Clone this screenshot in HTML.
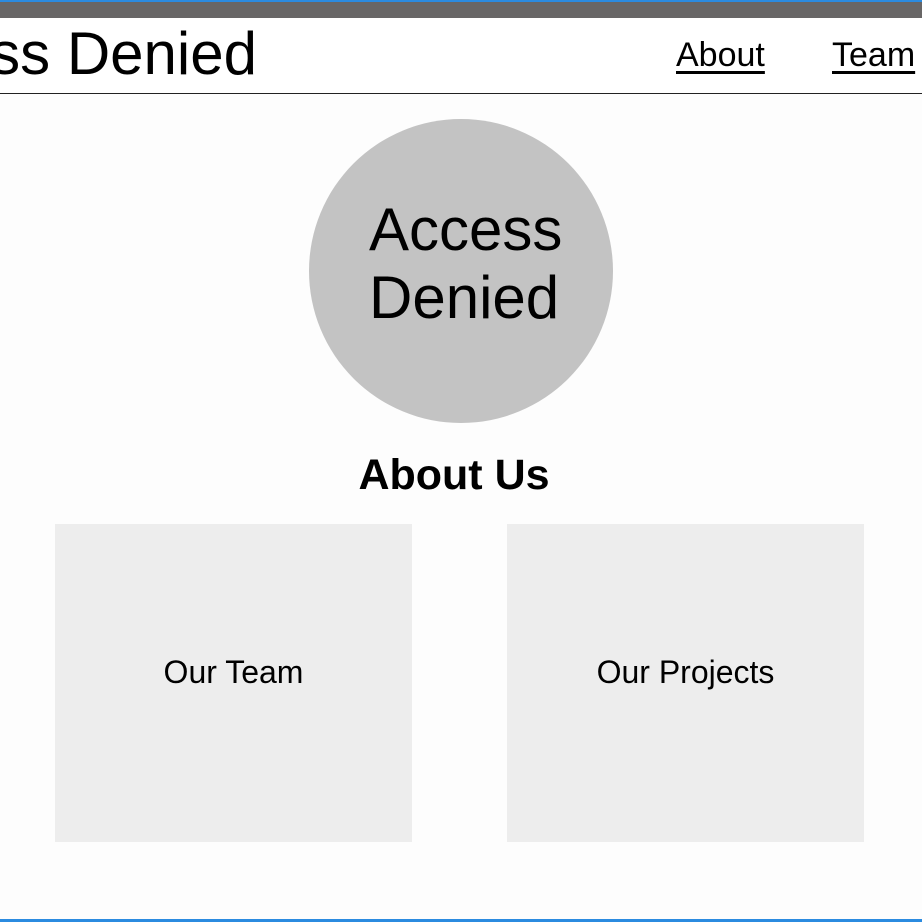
<!DOCTYPE html>
<html><head><style>
*{margin:0;padding:0;box-sizing:border-box}
body{width:922px;height:922px;background:#fdfdfd;position:relative;overflow:hidden;font-family:"Liberation Sans",Arial,sans-serif;color:#000}
.a{position:absolute}
</style></head><body>
<div class="a" style="left:0;top:0;width:922px;height:2px;background:#2b8be0"></div>
<div class="a" style="left:0;top:2px;width:922px;height:16px;background:#686666"></div>
<div class="a" style="left:0;top:18px;width:922px;height:76px;background:#fff;border-bottom:1px solid #222;overflow:hidden">
<div class="a" style="right:665px;top:0;font-size:60px;line-height:72px;white-space:nowrap">Access Denied</div>
<div class="a" style="left:676px;top:18px;font-size:34px;line-height:38px;text-decoration:underline;text-underline-offset:5px">About</div>
<div class="a" style="left:832px;top:18px;font-size:34px;line-height:38px;text-decoration:underline;text-underline-offset:5px;white-space:nowrap">Team</div>
</div>
<div class="a" style="left:309px;top:119px;width:304px;height:304px;border-radius:50%;background:#c3c3c3"></div>
<div class="a" style="left:369px;top:196px;font-size:60px;line-height:68px">Access<br>Denied</div>
<div class="a" style="left:0;top:450px;width:908px;text-align:center;font-size:43px;font-weight:bold;line-height:50px">About Us</div>
<div class="a" style="left:55px;top:524px;width:357px;height:318px;background:#ededed;display:flex;align-items:center;justify-content:center;font-size:32px;padding-bottom:22px">Our Team</div>
<div class="a" style="left:507px;top:524px;width:357px;height:318px;background:#ededed;display:flex;align-items:center;justify-content:center;font-size:32px;padding-bottom:22px">Our Projects</div>
<div class="a" style="left:0;top:919px;width:922px;height:3px;background:#2b8be0"></div>
</body></html>
